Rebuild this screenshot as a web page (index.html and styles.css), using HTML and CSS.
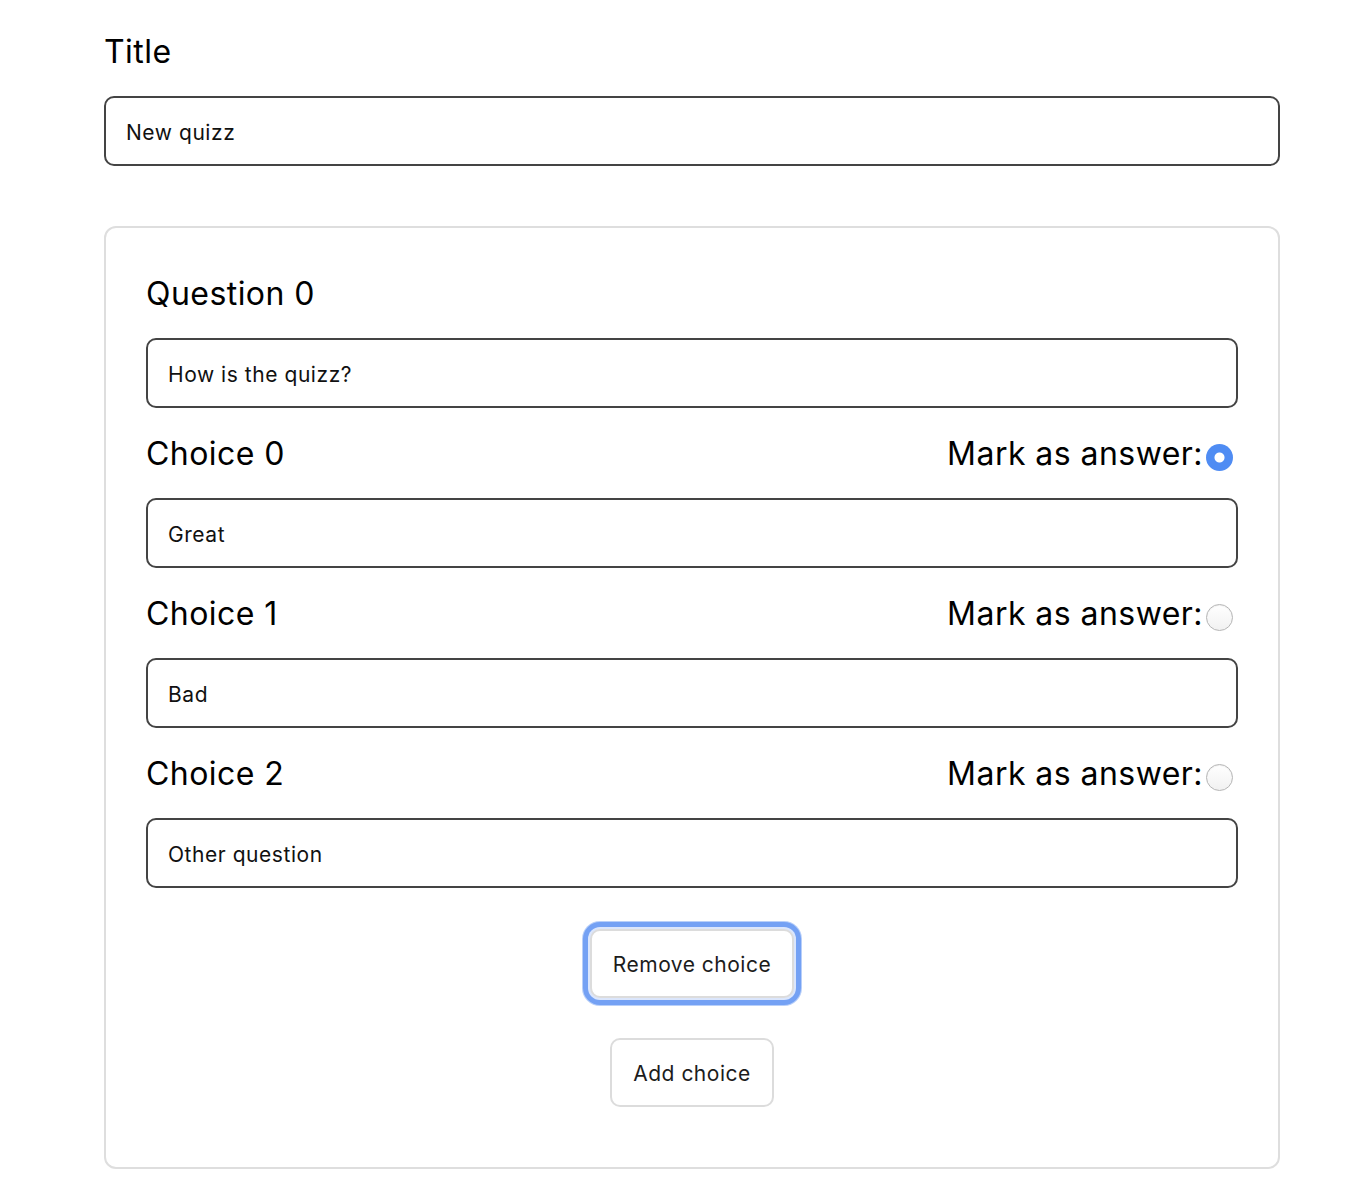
FILE: index.html
```html
<!DOCTYPE html>
<html>
<head>
<meta charset="utf-8">
<link rel="stylesheet" href="styles.css">
</head>
<body>
<div class="page">
  <div class="heading title-label">Title</div>
  <div class="field">New quizz</div>

  <div class="card">
    <div class="heading q-label">Question 0</div>
    <div class="field">How is the quizz?</div>

    <div class="choice-row">
      <div class="heading">Choice 0</div>
      <label class="mark heading">Mark as answer:<span class="radio checked"></span></label>
    </div>
    <div class="field">Great</div>

    <div class="choice-row">
      <div class="heading">Choice 1</div>
      <label class="mark heading">Mark as answer:<span class="radio"></span></label>
    </div>
    <div class="field">Bad</div>

    <div class="choice-row">
      <div class="heading">Choice 2</div>
      <label class="mark heading">Mark as answer:<span class="radio"></span></label>
    </div>
    <div class="field">Other question</div>

    <div class="actions">
      <button class="btn focused">Remove choice</button>
      <button class="btn">Add choice</button>
    </div>
  </div>
</div>
</body>
</html>
```

FILE: styles.css
```css
html, body {
  margin: 0;
  padding: 0;
  background: #ffffff;
}

body {
  font-family: Inter, "Liberation Sans", sans-serif;
  color: #111;
}

.page {
  width: 1176px;
  margin-left: 104px;
  padding-top: 32px;
  padding-bottom: 30px;
}

.heading {
  font-family: Inter, "Liberation Sans", sans-serif;
  font-size: 32px;
  line-height: 40px;
  letter-spacing: 0.45px;
  color: #000;
  font-weight: 400;
}

.title-label {
  margin-bottom: 24px;
}

.field {
  box-sizing: border-box;
  height: 70px;
  border: 2px solid #444;
  border-radius: 10px;
  padding: 2px 20px 0;
  display: flex;
  align-items: center;
  font-size: 21px;
  letter-spacing: 0.55px;
  color: #111;
}

.card {
  box-sizing: border-box;
  margin-top: 60px;
  border: 2px solid #dedede;
  border-radius: 12px;
  padding: 46px 40px 60px;
}

.q-label {
  margin-bottom: 24px;
}

.choice-row {
  display: flex;
  justify-content: space-between;
  align-items: center;
  height: 40px;
  margin-top: 26px;
  margin-bottom: 24px;
}

.mark {
  display: flex;
  align-items: center;
  gap: 3px;
  margin-right: 5px;
}

.radio {
  box-sizing: border-box;
  width: 27px;
  height: 27px;
  border-radius: 50%;
  margin-top: 6px;
  border: 1px solid #b5b5b5;
  background: linear-gradient(#ffffff, #f1f1f1);
  box-shadow: inset 0 1px 1px rgba(0,0,0,0.06);
}

.radio.checked {
  border: none;
  background: radial-gradient(circle, #ffffff 0 4.5px, #4f8cf3 5.5px);
  box-shadow: none;
}

.actions {
  display: flex;
  flex-direction: column;
  align-items: center;
  gap: 40px;
  margin-top: 41px;
}

.btn {
  box-sizing: border-box;
  height: 69px;
  padding: 2px 21px 0;
  border: 2px solid #dcdcdc;
  border-radius: 10px;
  background: #fff;
  font-family: Inter, "Liberation Sans", sans-serif;
  font-size: 21px;
  letter-spacing: 0.5px;
  color: #1c1c1c;
  cursor: pointer;
}

.btn.focused {
  outline: none;
  box-shadow: 0 0 0 2px #dbe6fc, 0 0 0 7px #74a1f4, 0 0 0 8px #b8cff9;
}
```
